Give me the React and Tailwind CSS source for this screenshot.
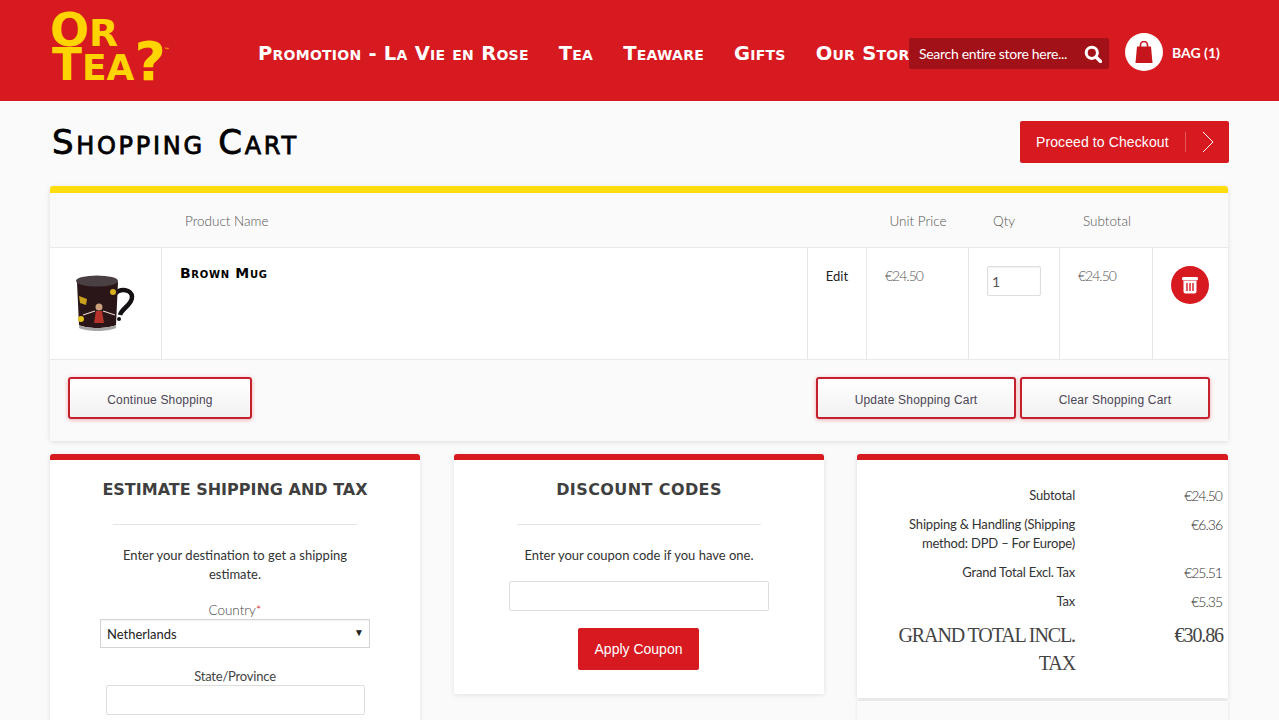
const gill = "font-['Lato',sans-serif] font-light";
const caps = "font-['DejaVu_Sans',sans-serif] font-bold [font-variant:small-caps]";

const navItems = [
  "Promotion - La Vie en Rose",
  "Tea",
  "Teaware",
  "Gifts",
  "Our Story",
];

const totals = [
  { label: "Subtotal", value: "€24.50" },
  { label: "Shipping & Handling (Shipping method: DPD – For Europe)", value: "€6.36" },
  { label: "Grand Total Excl. Tax", value: "€25.51" },
  { label: "Tax", value: "€5.35" },
];

const OutlineButton = ({ children, className }) => (
  <button
    className={`h-[42px] rounded-[3px] border-2 border-[#c4202e] bg-gradient-to-b from-white to-[#f1f1f1] pt-[3px] font-['Liberation_Sans',sans-serif] text-[12px] tracking-[0.2px] text-[#4b4454] shadow-[0_1px_4px_rgba(215,25,32,0.35)] ${className}`}
  >
    {children}
  </button>
);

const Mug = () => (
  <svg width="66" height="66" viewBox="0 0 66 66">
    <path d="M43 24c5-6 17-5 17 3 0 8-10 11-12 18" fill="none" stroke="#141013" strokeWidth="4.5" />
    <circle cx="47" cy="49" r="2" fill="#141013" />
    <path d="M5 12h41l-2 43c-8 4-30 4-37 0z" fill="#2a1518" />
    <ellipse cx="25" cy="11" rx="21" ry="5.5" fill="#4a4044" />
    <path d="M7 55c8 4 29 4 37 0l0 3c-8 4-29 4-37 0z" fill="#a5a5a5" />
    <circle cx="27" cy="37" r="3.5" fill="#c9a07a" />
    <path d="M24 41h6l2 12h-10z" fill="#b5332b" />
    <path d="M11 45l12-4M31 41l12 4" stroke="#e7d8c8" strokeWidth="1.2" />
    <path d="M7 26l8 3-1 6-6-2z" fill="#c9a01c" />
    <circle cx="41" cy="22" r="3" fill="#d8b01c" />
    <circle cx="9" cy="49" r="3" fill="#e2c21c" />
  </svg>
);

const App = () => {
  return (
    <div className={`h-[720px] overflow-hidden bg-[#fafafa] ${gill}`}>
      {/* Header */}
      <header className="flex h-[101px] items-start bg-[#d71920]">
        <div className="ml-[50px] mt-[8px] w-[208px] shrink-0 font-['DejaVu_Sans',sans-serif] font-bold text-[#ffd400]">
          <div className="h-[32px] text-[46px] leading-[44px]">
            O<span className="text-[38px]">R</span>
          </div>
          <div className="ml-[2px] h-[32px] text-[44px] leading-[44px]">
            T<span className="text-[36px]">EA</span>
            <span className="text-[54px] tracking-[-2px]">?</span>
            <span className="align-top text-[6px] leading-[20px]">™</span>
          </div>
        </div>
        <nav className={`mt-[43px] flex w-[651px] shrink-0 gap-[30px] overflow-hidden whitespace-nowrap text-[19.5px] leading-[22px] tracking-[0.25px] text-white ${caps}`}>
          {navItems.map((item) => (
            <a key={item}>{item}</a>
          ))}
        </nav>
        <div className="mt-[38px] flex h-[31px] w-[200px] shrink-0 items-center justify-between rounded-[2px] bg-[#a31118] pl-[10px] pr-[7px] text-[14px] font-normal tracking-[-0.3px] whitespace-nowrap text-white">
          <span>Search entire store here...</span>
          <svg width="18" height="18" viewBox="0 0 18 18" fill="none" stroke="#fff">
            <circle cx="7.8" cy="7.8" r="5.6" strokeWidth="3" />
            <path d="M12 12l4.5 4.5" strokeWidth="3.4" strokeLinecap="round" />
          </svg>
        </div>
        <div className="ml-[16px] mt-[33px] flex h-[38px] w-[38px] shrink-0 items-center justify-center rounded-full bg-white">
          <svg width="18" height="22" viewBox="0 0 18 22">
            <path d="M5.5 7V4a3.5 3.5 0 0 1 7 0v3" fill="none" stroke="#c5161e" strokeWidth="1.6" />
            <path d="M2 5.5h14l1.5 16.5H.5z" fill="#c5161e" />
          </svg>
        </div>
        <span className="ml-[9px] mt-[43px] text-[14px] font-bold leading-[20px] text-white">BAG (1)</span>
      </header>

      {/* Title */}
      <div className="flex h-[85px] items-center justify-between pb-[3px] pl-[52px] pr-[50px]">
        <h1 className="font-['DejaVu_Sans',sans-serif] text-[34px] font-normal tracking-[2.7px] text-black [font-variant:small-caps] [-webkit-text-stroke:0.8px_black]">Shopping Cart</h1>
        <button className="flex h-[42px] w-[209px] items-center rounded-[2px] bg-[#d71920] pl-[16px] font-['Liberation_Sans',sans-serif] text-[14px] tracking-[0.1px] text-white">
          <span className="w-[149px] text-left">Proceed to Checkout</span>
          <span className="h-[20px] border-l border-[#e4565b]" />
          <svg width="12" height="22" viewBox="0 0 12 22" fill="none" stroke="#fff" strokeWidth="1" className="ml-[16px]">
            <path d="M1 1l10 10L1 21" />
          </svg>
        </button>
      </div>

      {/* Cart */}
      <section className="mx-[50px] h-[255px] w-[1178px] rounded-t-[3px] border-t-[7px] border-[#ffdd0e] bg-[#fafafa] shadow-[0_1px_5px_rgba(0,0,0,0.12)]">
        <div className="grid h-[54px] grid-cols-[112px_646px_59px_102px_91px_93px_1fr] items-center pt-[2px] text-[13.5px] text-[#555]">
          <span />
          <span className="pl-[23px]">Product Name</span>
          <span />
          <span className="text-center">Unit Price</span>
          <span className="pl-[24px]">Qty</span>
          <span className="pl-[23px]">Subtotal</span>
          <span />
        </div>
        <div className="grid h-[113px] grid-cols-[112px_646px_59px_102px_91px_93px_1fr] border-y border-[#e9e9e9] bg-white text-[14px] tracking-[-1px] text-[#555]">
          <div className="flex items-center justify-center border-r border-[#e6e6e6] pb-[2px] pr-[2px]">
            <Mug />
          </div>
          <div className={`border-r border-[#e6e6e6] pl-[18px] pt-[16px] text-[14px] leading-[18px] tracking-[0.7px] text-black ${caps}`}>
            Brown Mug
          </div>
          <div className="border-r border-[#e6e6e6] pt-[18px] text-center text-[13px] font-normal leading-[20px] tracking-normal text-[#222]">Edit</div>
          <div className="border-r border-[#e6e6e6] pl-[18px] pt-[18px] leading-[20px]">€24.50</div>
          <div className="border-r border-[#e6e6e6] pl-[18px] pt-[18px]">
            <div className="flex h-[30px] w-[54px] items-center rounded-[2px] border border-[#ddd] pl-[4px] text-[14px] font-normal tracking-normal text-[#555] shadow-[inset_0_1px_2px_rgba(0,0,0,0.06)]">1</div>
          </div>
          <div className="border-r border-[#e6e6e6] pl-[18px] pt-[18px] leading-[20px]">€24.50</div>
          <div className="pl-[18px] pt-[18px]">
            <div className="flex h-[38px] w-[38px] items-center justify-center rounded-full bg-[#d71920]">
              <svg width="18" height="18" viewBox="0 0 18 18" fill="#fff">
                <rect x="1" y="1" width="16" height="3.4" rx="1.4" />
                <path d="M2.5 5h13v10.5a2 2 0 0 1-2 2h-9a2 2 0 0 1-2-2z" />
                <path d="M6 7v8M9 7v8M12 7v8" stroke="#d71920" strokeWidth="1.4" />
              </svg>
            </div>
          </div>
        </div>
        <div className="flex items-start pl-[18px] pt-[17px]">
          <OutlineButton className="w-[184px]">Continue Shopping</OutlineButton>
          <OutlineButton className="ml-[564px] w-[200px]">Update Shopping Cart</OutlineButton>
          <OutlineButton className="ml-[4px] w-[190px]">Clear Shopping Cart</OutlineButton>
        </div>
      </section>

      {/* Lower panels */}
      <div className="mx-[50px] mt-[13px] flex w-[1178px] items-start">
        <div className="h-[300px] w-[370px] rounded-t-[3px] border-t-[6px] border-[#d71920] bg-white text-center shadow-[0_1px_5px_rgba(0,0,0,0.1)]">
          <h2 className="mt-[20px] font-['DejaVu_Sans',sans-serif] text-[16px] font-bold leading-[20px] text-[#3f3f3f]">ESTIMATE SHIPPING AND TAX</h2>
          <div className="mx-auto mt-[24px] w-[244px] border-t border-[#e5e5e5]" />
          <p className="mx-auto mt-[21px] w-[240px] text-[13px] font-normal leading-[19px] text-[#333]">
            Enter your destination to get a shipping estimate.
          </p>
          <div className="mt-[16px] text-[13.5px] leading-[20px] text-[#444]">
            Country<span className="text-[#d71920]">*</span>
          </div>
          <div className="ml-[50px] mt-[-1px] flex h-[29px] w-[270px] items-center justify-between border border-[#d5d5d5] pl-[6px] pr-[5px] pt-[2px] text-[13px] font-normal text-[#222] shadow-[inset_0_1px_2px_rgba(0,0,0,0.05)]">
            <span>Netherlands</span>
            <span className="pb-[4px] text-[10px]">▼</span>
          </div>
          <div className="mt-[18px] text-[13px] font-normal leading-[20px] tracking-[-0.2px] text-[#444]">State/Province</div>
          <div className="ml-[56px] mt-[-1px] h-[30px] w-[259px] rounded-[2px] border border-[#ddd]" />
        </div>

        <div className="ml-[34px] h-[240px] w-[370px] rounded-t-[3px] border-t-[6px] border-[#d71920] bg-white text-center shadow-[0_1px_5px_rgba(0,0,0,0.1)]">
          <h2 className="mt-[20px] font-['DejaVu_Sans',sans-serif] text-[16px] font-bold leading-[20px] tracking-[0.4px] text-[#3f3f3f]">DISCOUNT CODES</h2>
          <div className="mx-auto mt-[24px] w-[244px] border-t border-[#e5e5e5]" />
          <p className="mt-[21px] text-[13px] font-normal leading-[19px] text-[#333]">Enter your coupon code if you have one.</p>
          <div className="ml-[55px] mt-[16px] h-[30px] w-[260px] rounded-[2px] border border-[#ddd]" />
          <button className="mr-[1px] mt-[17px] h-[42px] w-[121px] rounded-[2px] bg-[#d71920] font-['Liberation_Sans',sans-serif] text-[14px] text-white">
            Apply Coupon
          </button>
        </div>

        <div className="ml-[33px] w-[371px]">
          <div className="h-[244px] rounded-t-[3px] border-t-[6px] border-[#d71920] bg-white pt-[26px] shadow-[0_1px_5px_rgba(0,0,0,0.12)]">
            {totals.map((row) => (
              <div key={row.label} className="mb-[10px] grid grid-cols-[218px_147px] text-right text-[13px] font-normal leading-[19px] tracking-[-0.2px] text-[#333]">
                <span className="pl-[46px]">{row.label}</span>
                <span className="text-[14px] font-light tracking-[-1px]">{row.value}</span>
              </div>
            ))}
            <div className="mt-[9px] grid grid-cols-[218px_148px] text-right font-['Liberation_Serif',serif] text-[20px] font-normal leading-[28px] tracking-[-1.1px] text-[#444]">
              <span className="pl-[30px]">GRAND TOTAL INCL. TAX</span>
              <span>€30.86</span>
            </div>
          </div>
          <div className="mt-[3px] h-[40px] bg-[#fafafa] shadow-[0_0_3px_rgba(0,0,0,0.1)]" />
        </div>
      </div>
    </div>
  );
};

export default App;
